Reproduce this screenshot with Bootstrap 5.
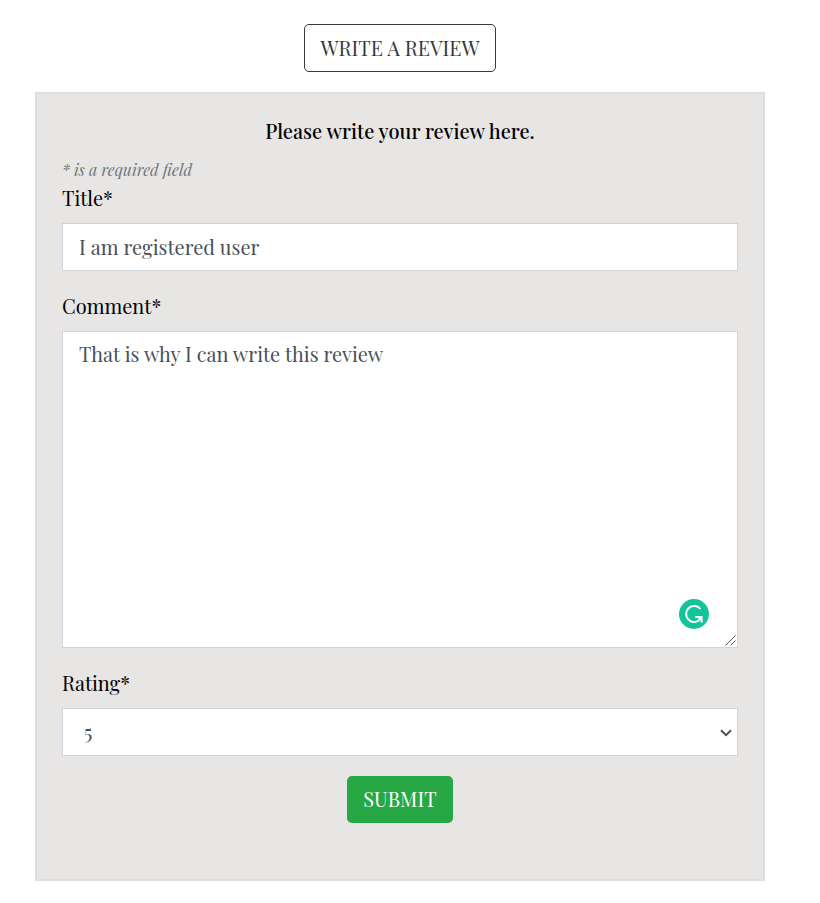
<!DOCTYPE html>
<html lang="en">
<head>
<meta charset="utf-8">
<meta name="viewport" content="width=device-width, initial-scale=1">
<title>Write a review</title>
<link href="https://cdn.jsdelivr.net/npm/bootstrap@5.3.0/dist/css/bootstrap.min.css" rel="stylesheet">
<style>
  body { font-family: "Playfair Display", "Liberation Serif", serif; font-size: 20px; line-height: 30px; color: #000; background: #fff; }
  .review-wrap { width: 730px; margin-left: 35px; padding-top: 24px; }
  .btn-review { height: 48px; width: 192px; padding: 0; font-size: 20px; color: #343a40; border: 1px solid #343a40; border-radius: 5px; }
  .review-panel { height: 789px; margin-top: 20px; padding: 22px 25px 0; background: #e8e6e4; border: 2px solid #dfdede; }
  .review-heading { font-size: 20px; line-height: 30px; font-weight: 500; }
  .required-note { font-size: 16px; line-height: 24px; color: #6c757d; margin-top: 12px; }
  .review-panel .form-label { display: block; line-height: 30px; margin: 0 0 10px; padding-top: 1px; }
  .review-panel .form-control, .review-panel .form-select { font-family: inherit; font-size: 20px; line-height: 30px; color: #495057; border: 1px solid #ced4da; border-radius: 0; padding: 8px 16px; box-shadow: none; background-color: #fff; }
  .review-panel .form-control { height: 48px; }
  .review-panel input.form-control { padding: 7px 16px 9px; }
  .review-panel textarea.form-control { height: 317px; resize: none; padding-top: 7px; }
  .review-panel .form-select { height: 48px; padding: 8px 20px 8px 21px; background-image: url("data:image/svg+xml,%3csvg xmlns='http://www.w3.org/2000/svg' viewBox='0 0 12 8'%3e%3cpath d='M1 1.2 6 6.2 11 1.2' fill='none' stroke='%23495057' stroke-width='2'/%3e%3c/svg%3e"); background-position: right 5px top 20px; background-size: 12px 8px; }
  .field-group { margin-bottom: 19px; }
  .helper-badge { right: 29px; bottom: 19px; width: 30px; height: 30px; }
  .resize-grip { right: 2px; bottom: 2px; width: 11px; height: 11px; }
  .btn-submit { width: 106px; height: 47px; padding: 0 0 1px; font-size: 20px; color: #fff; background: #28a745; border: 0; border-radius: 5px; }
</style>
<script src="https://cdn.jsdelivr.net/npm/bootstrap@5.3.0/dist/js/bootstrap.bundle.min.js"></script>
</head>
<body>
<main class="review-wrap">
  <div class="d-flex justify-content-center">
    <button type="button" class="btn btn-review">WRITE A REVIEW</button>
  </div>
  <form class="review-panel">
    <h1 class="review-heading text-center mb-0">Please write your review here.</h1>
    <p class="required-note fst-italic mb-0">* is a required field</p>
    <div class="field-group">
      <label class="form-label" for="title">Title*</label>
      <input id="title" class="form-control" type="text" value="I am registered user" spellcheck="false">
    </div>
    <div class="field-group">
      <label class="form-label" for="comment">Comment*</label>
      <div class="position-relative">
        <textarea id="comment" class="form-control" spellcheck="false">That is why I can write this review</textarea>
        <svg class="helper-badge position-absolute" viewBox="0 0 30 30" aria-hidden="true">
          <circle cx="15" cy="15" r="15" fill="#15c39a"/>
          <path d="M21.4 10A8 8 0 1 0 19.8 21.5M16.3 18H22.6V23.6M22.4 18.2L19 22" fill="none" stroke="#fff" stroke-width="2"/>
        </svg>
        <svg class="resize-grip position-absolute" viewBox="0 0 11 11" aria-hidden="true">
          <path d="M.5 10.5 10.5.5M5.5 10.5 10.5 5.5" fill="none" stroke="#555" stroke-width="1"/>
        </svg>
      </div>
    </div>
    <div>
      <label class="form-label" for="rating">Rating*</label>
      <select id="rating" class="form-select"><option>5</option></select>
    </div>
    <div class="d-flex justify-content-center pt-3 mt-1">
      <button type="button" class="btn btn-submit">SUBMIT</button>
    </div>
  </form>
</main>
</body>
</html>
